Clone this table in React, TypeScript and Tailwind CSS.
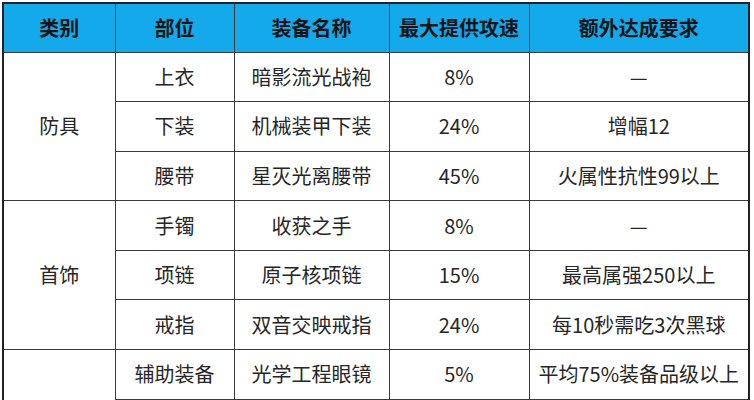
const headers = ["类别", "部位", "装备名称", "最大提供攻速", "额外达成要求"];

type Row = { part: string; name: string; speed: string; extra: string };

const groups: { category: string; rows: Row[] }[] = [
  {
    category: "防具",
    rows: [
      { part: "上衣", name: "暗影流光战袍", speed: "8%", extra: "—" },
      { part: "下装", name: "机械装甲下装", speed: "24%", extra: "增幅12" },
      { part: "腰带", name: "星灭光离腰带", speed: "45%", extra: "火属性抗性99以上" },
    ],
  },
  {
    category: "首饰",
    rows: [
      { part: "手镯", name: "收获之手", speed: "8%", extra: "—" },
      { part: "项链", name: "原子核项链", speed: "15%", extra: "最高属强250以上" },
      { part: "戒指", name: "双音交映戒指", speed: "24%", extra: "每10秒需吃3次黑球" },
    ],
  },
  {
    category: "",
    rows: [
      { part: "辅助装备", name: "光学工程眼镜", speed: "5%", extra: "平均75%装备品级以上" },
      { part: "", name: "", speed: "", extra: "" },
      { part: "", name: "", speed: "", extra: "" },
    ],
  },
];

const cell = "border border-[#3a3a3a] text-center align-middle p-0";

export default function App() {
  return (
    <div
      className="h-[400px] w-[754px] overflow-hidden bg-white pl-[2px] pt-[2px]"
      style={{ fontFamily: '"Noto Sans CJK SC", "Noto Sans", sans-serif' }}
    >
      <table className="w-[748px] table-fixed border-collapse border-2 border-[#222] text-[20px] text-[#262626]">
        <colgroup>
          <col className="w-[112px]" />
          <col className="w-[119px]" />
          <col className="w-[155px]" />
          <col className="w-[140px]" />
          <col />
        </colgroup>
        <thead>
          <tr className="h-[49px] bg-[#14a9ea]">
            {headers.map((h) => (
              <th key={h} className={`${cell} font-bold text-[#151515]`}>
                {h}
              </th>
            ))}
          </tr>
        </thead>
        <tbody>
          {groups.map((g, gi) =>
            g.rows.map((r, i) => (
              <tr key={`${gi}-${i}`} className="h-[49.6px]">
                {i === 0 && (
                  <td rowSpan={g.rows.length} className={cell}>
                    {g.category}
                  </td>
                )}
                <td className={cell}>{r.part}</td>
                <td className={cell}>{r.name}</td>
                <td className={cell}>{r.speed}</td>
                <td className={cell}>{r.extra}</td>
              </tr>
            ))
          )}
        </tbody>
      </table>
    </div>
  );
}
